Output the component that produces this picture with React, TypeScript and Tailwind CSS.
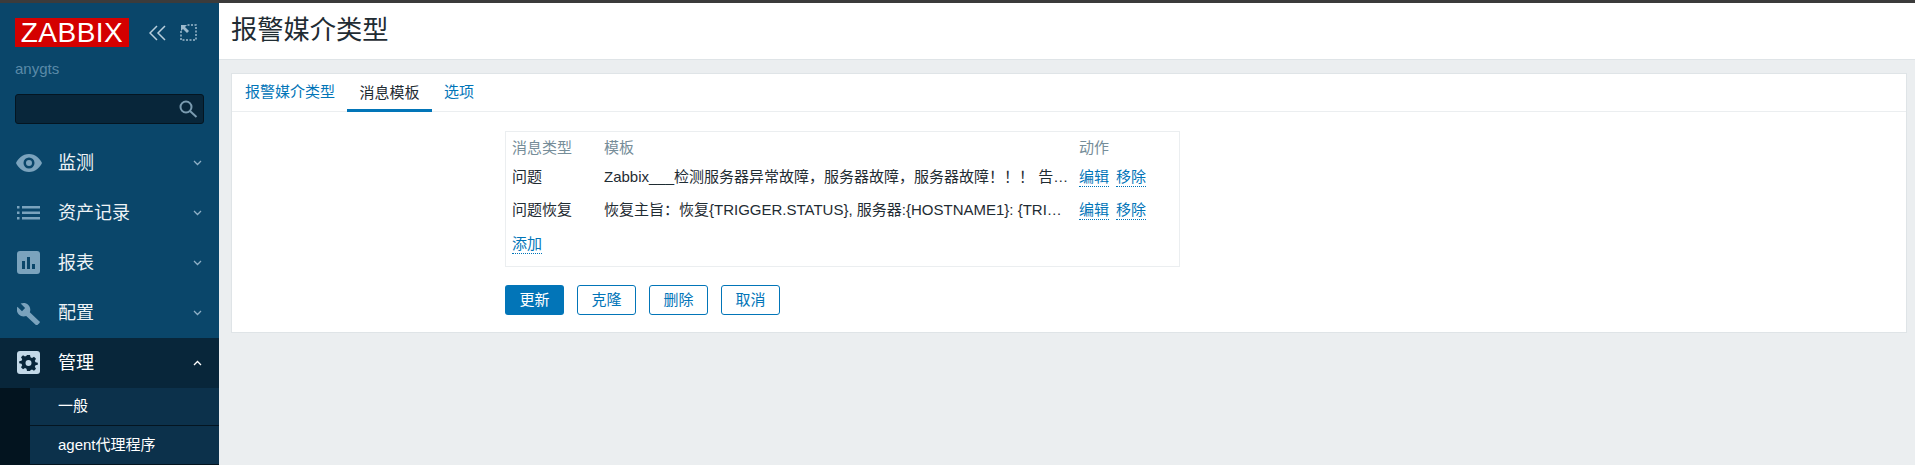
import { ReactNode } from "react";

const font = { fontFamily: '"Liberation Sans", "Noto Sans CJK SC", sans-serif' };

const Eye = () => (
  <svg width="28" height="20" viewBox="0 0 28 20">
    <path fill="#7ba3bd" fillRule="evenodd" d="M14 1C7.5 1 2.6 6 1 10c1.600 4 6.500 9 13 9s11.400-5 13-9c-1.600-4-6.500-9-13-9zm0 3.500a5.500 5.500 0 1 1 0 11 5.500 5.500 0 0 1 0-11zm0 2.500a3 3 0 1 0 0 6 3 3 0 0 0 0-6z" />
  </svg>
);

const ListIcon = () => (
  <svg width="24" height="14" viewBox="0 0 24 14" fill="#7ba3bd">
    <rect x="0" y="0" width="2.500" height="2.500" />
    <rect x="0" y="5.500" width="2.500" height="2.500" />
    <rect x="0" y="11" width="2.500" height="2.500" />
    <rect x="5" y="0" width="18" height="2.500" />
    <rect x="5" y="5.500" width="18" height="2.500" />
    <rect x="5" y="11" width="18" height="2.500" />
  </svg>
);

const ChartIcon = () => (
  <svg width="24" height="24" viewBox="0 0 24 24">
    <rect width="23" height="23" rx="3" fill="#7ba3bd" />
    <rect x="5" y="10" width="3" height="8" fill="#0a466a" />
    <rect x="10" y="6" width="3" height="12" fill="#0a466a" />
    <rect x="15" y="13" width="3" height="5" fill="#0a466a" />
  </svg>
);

const Wrench = () => (
  <svg width="24" height="24" viewBox="0 0 24 24">
    <path fill="#7ba3bd" d="M22.500 20.500 12.800 11.300c1-2.500.5-5.400-1.500-7.400C9.200 1.800 6.100 1.400 3.600 2.600l4.500 4.500-3.100 3.100L.4 5.700C-.8 8.200-.3 11.300 1.800 13.400c2 2 4.900 2.500 7.400 1.500l9.700 9.100c.4.400 1.100.400 1.500 0l2.100-2c.4-.4.4-1.100.4-1.500z" />
  </svg>
);

const GearBox = () => (
  <svg width="24" height="24" viewBox="0 0 24 24">
    <rect width="23" height="23" rx="3" fill="#c3d9e8" />
    <path
      fill="#08263a"
      fillRule="evenodd"
      d="M10 4h3l.5 2.300 1.500.7 2-1.200 2 2-1.200 2 .7 1.500 2.300.5v2l-2.300.5-.7 1.500 1.200 2-2 2-2-1.200-1.500.7L13 20.100h-3l-.5-2.300-1.500-.7-2 1.200-2-2 1.200-2-.7-1.500-2.300-.5v-2l2.300-.5.7-1.500-1.200-2 2-2 2 1.200 1.500-.7zm1.500 5a3 3 0 1 0 0 6 3 3 0 0 0 0-6z"
    />
  </svg>
);

const Chevron = ({ up }: { up?: boolean }) => (
  <svg width="9" height="6" viewBox="0 0 9 6" fill="none" className={up ? "rotate-180" : ""}>
    <path d="M1 1l3.500 3.500L8 1" stroke={up ? "#ffffff" : "#8fb0c6"} strokeWidth="1.300" />
  </svg>
);

function MenuItem({ icon, label, active }: { icon: ReactNode; label: string; active?: boolean }) {
  return (
    <div className={`flex items-center h-[50px] ${active ? "bg-[#08263a]" : ""}`}>
      <div className="w-[58px] pl-[15px] flex items-center">{icon}</div>
      <span className={`flex-1 text-[18px] ${active ? "text-white" : "text-[#eef3f6]"}`}>{label}</span>
      <div className="w-[9px] mr-[17px] flex"><Chevron up={active} /></div>
    </div>
  );
}

function Sidebar() {
  return (
    <aside className="w-[219px] h-full bg-[#0a466a] shrink-0 flex flex-col overflow-hidden">
      <div className="pl-[15px] pt-[15px] pr-[15px]">
        <div className="flex items-center">
          <div className="w-[114px] h-[29px] bg-[#d40000] text-white text-[28px] leading-[29px] text-center tracking-[0.5px]">ZABBIX</div>
          <svg className="ml-[20px]" width="18" height="16" viewBox="0 0 18 16" fill="none" stroke="#b9cfdd" strokeWidth="1.500">
            <path d="M8 1 1 8l7 7M16 1 9 8l7 7" />
          </svg>
          <svg className="ml-[13px]" width="17" height="17" viewBox="0 0 17 17" fill="none">
            <path d="M1 7V16H16V1H7" stroke="#9dbacd" strokeWidth="1.500" strokeDasharray="2 1.500" />
            <path d="M1 1h6L5 3l4 4-2 2-4-4-2 2z" fill="#9dbacd" />
          </svg>
        </div>
        <div className="mt-[12px] text-[15px] leading-[20px] text-[#5a8aa8]">anygts</div>
        <div className="mt-[15px] h-[30px] w-[189px] bg-[#08263a] border border-[#041521] rounded-[3px] flex items-center justify-end pr-[5px]">
          <svg width="20" height="20" viewBox="0 0 20 20" fill="none" stroke="#7a9bb0" strokeWidth="2">
            <circle cx="8" cy="8" r="5.500" />
            <path d="M12 12l6.500 6" />
          </svg>
        </div>
      </div>
      <nav className="mt-[14px]">
        <MenuItem icon={<Eye />} label="监测" />
        <MenuItem icon={<div className="pl-[2px]"><ListIcon /></div>} label="资产记录" />
        <MenuItem icon={<div className="pl-[2px]"><ChartIcon /></div>} label="报表" />
        <MenuItem icon={<div className="pl-[2px]"><Wrench /></div>} label="配置" />
        <MenuItem icon={<div className="pl-[2px]"><GearBox /></div>} label="管理" active />
      </nav>
      <div className="flex-1 bg-[#03141f] pl-[30px]">
        <div className="h-[38px] bg-[#0c314b] border-b border-[#041521] pl-[28px] flex items-center text-[15px] text-white">一般</div>
        <div className="h-[38px] bg-[#0c314b] pl-[28px] flex items-center text-[15px] text-white">agent代理程序</div>
      </div>
    </aside>
  );
}

const Link = ({ children }: { children: ReactNode }) => (
  <a className="text-[#0275b8] border-b border-dotted border-[#0275b8] leading-[18px] inline-block">{children}</a>
);

function Row({ type, template }: { type: string; template: string }) {
  return (
    <div className="flex h-[33px] items-center">
      <div className="w-[92px] text-[#1f2c33]">{type}</div>
      <div className="w-[475px] whitespace-nowrap text-[#1f2c33]">{template}</div>
      <div className="flex gap-[7px]">
        <Link>编辑</Link>
        <Link>移除</Link>
      </div>
    </div>
  );
}

const OutlineButton = ({ children }: { children: ReactNode }) => (
  <button className="w-[59px] h-[30px] border border-[#0275b8] rounded-[3px] text-[#0275b8] bg-white text-[15px]">{children}</button>
);

export default function App() {
  return (
    <div className="w-[1915px] h-[465px] flex flex-col overflow-hidden bg-[#ebeef0]" style={font}>
      <div className="h-[3px] bg-[#3b3b3b] shrink-0" />
      <div className="flex flex-1 min-h-0">
        <Sidebar />
        <main className="flex-1 flex flex-col">
          <header className="h-[57px] bg-white border-b border-[#dfe4e7] pl-[12px] flex items-center text-[26.25px] text-[#1f2c33]">报警媒介类型</header>
          <section className="mt-[13px] ml-[12px] mr-[8px] h-[260px] bg-white border border-[#dfe4e7] text-[15px]">
            <div className="flex h-[38px] border-b border-[#ebeef0]">
              <div className="pl-[13px] pr-[12px] flex items-center text-[#0275b8]">报警媒介类型</div>
              <div className="px-[12.5px] flex items-center text-[#1f2c33] border-b-[3px] border-[#0275b8] h-[38px] pt-[3px]">消息模板</div>
              <div className="px-[12px] flex items-center text-[#0275b8]">选项</div>
            </div>
            <div className="ml-[273px] mt-[19px] w-[675px]">
              <div className="h-[136px] border border-[#ebeef0] px-[6px] pt-[4px]">
                <div className="flex h-[25px] items-center text-[#768d99]">
                  <div className="w-[92px]">消息类型</div>
                  <div className="w-[475px]">模板</div>
                  <div>动作</div>
                </div>
                <Row type="问题" template="Zabbix___检测服务器异常故障，服务器故障，服务器故障！！！ 告…" />
                <Row type="问题恢复" template="恢复主旨：恢复{TRIGGER.STATUS}, 服务器:{HOSTNAME1}: {TRI…" />
                <div className="h-[34px] flex items-center"><Link>添加</Link></div>
              </div>
              <div className="flex gap-[13px] mt-[18px]">
                <button className="w-[59px] h-[30px] rounded-[3px] bg-[#0275b8] text-white text-[15px]">更新</button>
                <OutlineButton>克隆</OutlineButton>
                <OutlineButton>删除</OutlineButton>
                <OutlineButton>取消</OutlineButton>
              </div>
            </div>
          </section>
        </main>
      </div>
    </div>
  );
}
